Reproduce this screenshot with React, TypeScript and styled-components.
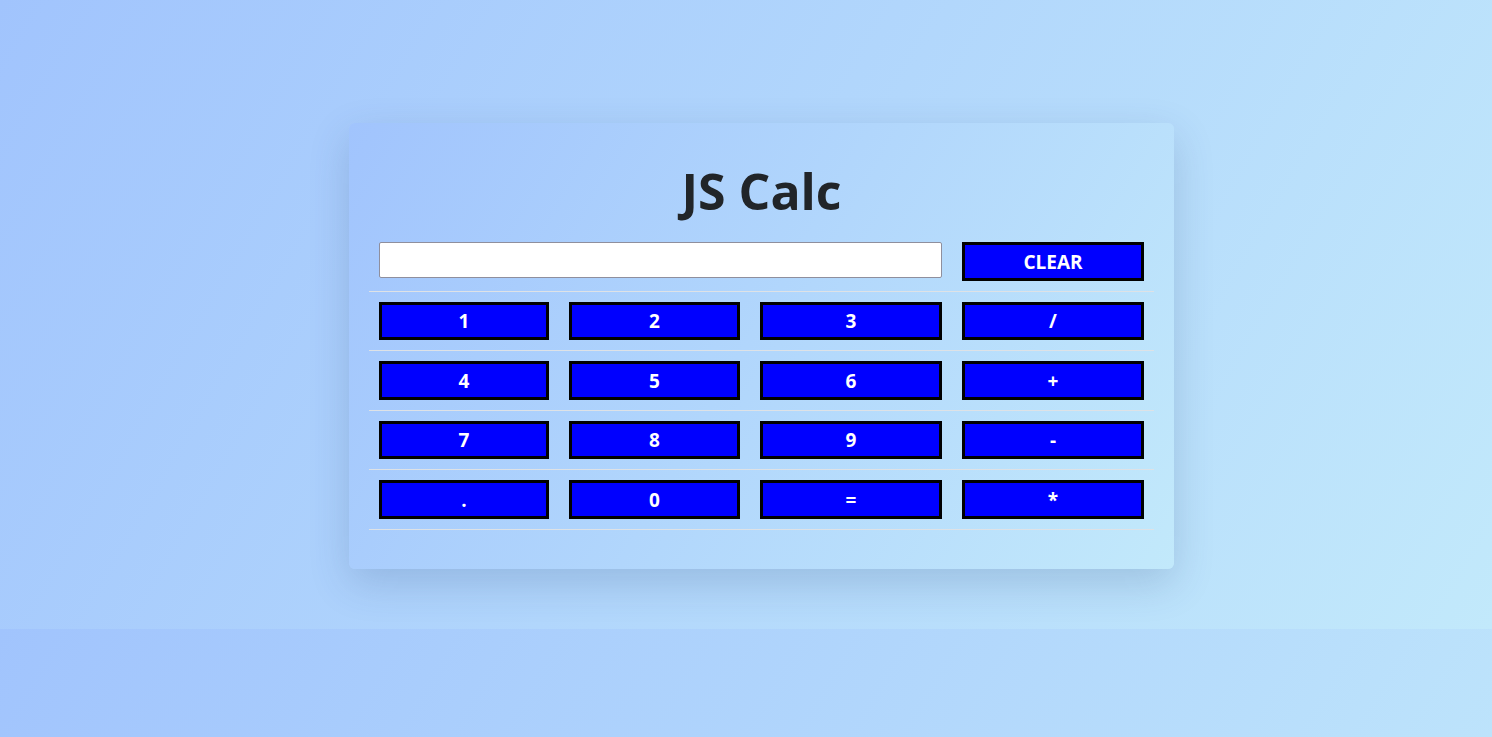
import React from 'react'
import styled, { createGlobalStyle } from 'styled-components'

const GlobalStyle = createGlobalStyle`
  html {
    background-image: linear-gradient(120deg, #a1c4fd 0%, #c2e9fb 100%);
    background-size: 100% 629px;
  }
  body {
    margin: 0;
    font-family: "Open Sans", "Noto Sans", sans-serif;
    color: #212529;
  }
`

const Page = styled.div`
  display: flex;
  justify-content: center;
  padding: 123px 0 60px 31px;
`

const Card = styled.div`
  width: 825px;
  box-sizing: border-box;
  padding: 38px 20px 39px;
  border-radius: 6px;
  background-image: linear-gradient(120deg, #a1c4fd 0%, #c2e9fb 100%);
  box-shadow: 0 14px 40px rgba(40, 70, 120, 0.2);
`

const Title = styled.h1`
  margin: 0 0 11px;
  font-size: 50px;
  line-height: 60px;
  font-weight: 700;
  text-align: center;
  color: #212529;
`

const Keys = styled.div`
  display: flex;
  flex-direction: column;
`

const Row = styled.div`
  display: grid;
  grid-template-columns: 190px 191px 202px 202px;
  align-items: start;
  border-bottom: 1px solid #dee2e6;
`

const Cell = styled.div<{ span?: number }>`
  padding: 10px;
  grid-column: span ${({ span }) => span || 1};
`

const Display = styled.input`
  display: block;
  width: 100%;
  height: 36px;
  box-sizing: border-box;
  border: 1px solid #8f8f9d;
  border-radius: 2px;
  background: #fff;
  font-family: inherit;
  font-size: 18px;
  padding: 0 8px;
`

const Key = styled.button`
  display: block;
  width: 100%;
  height: 38.5px;
  box-sizing: border-box;
  border: 3px solid #000;
  border-radius: 0;
  background: #0000ff;
  color: #fff;
  font-family: "Open Sans", "Noto Sans", sans-serif;
  font-size: 19px;
  font-weight: 700;
  line-height: 1;
  padding: 2px 0 0;
  cursor: pointer;
`

const rows = [
  ['1', '2', '3', '/'],
  ['4', '5', '6', '+'],
  ['7', '8', '9', '-'],
  ['.', '0', '=', '*'],
]

const App: React.FC = () => {
  return (
    <>
      <GlobalStyle />
      <Page>
        <Card>
          <Title>JS Calc</Title>
          <Keys>
            <Row>
              <Cell span={3}>
                <Display type="text" readOnly />
              </Cell>
              <Cell>
                <Key>CLEAR</Key>
              </Cell>
            </Row>
            {rows.map((row, i) => (
              <Row key={i}>
                {row.map((k) => (
                  <Cell key={k}>
                    <Key>{k}</Key>
                  </Cell>
                ))}
              </Row>
            ))}
          </Keys>
        </Card>
      </Page>
    </>
  )
}

export default App
